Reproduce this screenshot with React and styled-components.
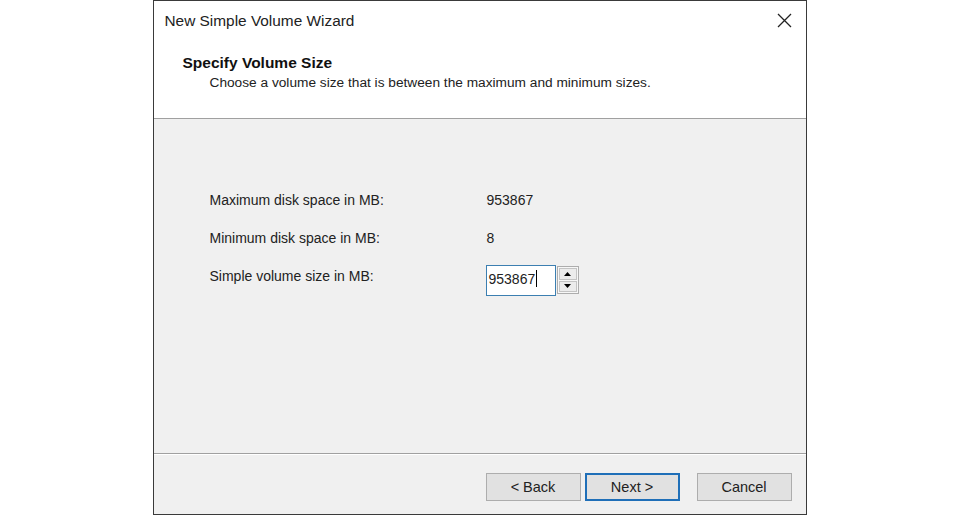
import React from 'react'
import styled, { createGlobalStyle } from 'styled-components'

const GlobalStyle = createGlobalStyle`
  html, body {
    margin: 0;
    padding: 0;
    background: #ffffff;
  }
  body {
    font-family: "Liberation Sans", Arial, sans-serif;
    color: #1a1a1a;
  }
`

const Page = styled.div`
  width: 960px;
  height: 516px;
  display: flex;
  justify-content: center;
`

const Window = styled.div`
  width: 652px;
  height: 513px;
  margin-left: -1px;
  border: 1px solid #3a3a3a;
  display: flex;
  flex-direction: column;
  background: #f0f0f0;
`

const TitleBar = styled.div`
  height: 39px;
  display: flex;
  align-items: center;
  justify-content: space-between;
  padding: 0 10px 0 11px;
  background: #ffffff;
  font-size: 15.4px;
  color: #222;
`

const CloseButton = styled.div`
  width: 20px;
  height: 20px;
  display: flex;
  align-items: center;
  justify-content: center;
  margin-right: 1px;
`

const Header = styled.div`
  height: 79px;
  box-sizing: border-box;
  background: #ffffff;
  border-bottom: 1px solid #a0a0a0;
  padding: 14px 0 0 29px;
`

const HeaderTitle = styled.div`
  font-size: 15.5px;
  font-weight: bold;
  color: #111;
  line-height: 17px;
`

const HeaderSub = styled.div`
  font-size: 13.7px;
  color: #222;
  margin-top: 4px;
  padding-left: 27px;
`

const Body = styled.div`
  flex: 1;
  padding: 70px 0 0 56px;
  border-bottom: 1px solid #a0a0a0;
  box-shadow: 0 1px 0 #ffffff;
  display: grid;
  grid-template-columns: 277px auto;
  grid-auto-rows: 38px;
  align-content: start;
  font-size: 14px;
  color: #222;
`

const Label = styled.div`
  display: flex;
  align-items: center;
  height: 22px;
`

const Value = styled.div`
  display: flex;
  align-items: center;
  height: 22px;
`

const SpinRow = styled.div`
  display: flex;
  align-items: center;
  gap: 1px;
  margin-top: -8px;
  margin-left: -1px;
`

const Input = styled.div`
  width: 66px;
  height: 28px;
  box-sizing: content-box;
  border: 1px solid #3c7fb1;
  background: #ffffff;
  display: flex;
  align-items: center;
  padding: 0 0 3px 2px;
  height: 26px;
  font-size: 14px;
`

const Caret = styled.span`
  display: inline-block;
  width: 1px;
  height: 17px;
  background: #000;
  margin-left: 1px;
`

const Spinner = styled.div`
  width: 22px;
  height: 28px;
  border: 1px solid #adadad;
  background: #f7f7f7;
  display: flex;
  flex-direction: column;
  justify-content: space-between;
  padding: 1px;
  box-sizing: border-box;
`

const SpinButton = styled.div`
  flex: 1;
  display: flex;
  align-items: center;
  justify-content: center;
  border: 1px solid #c4c4c4;
  background: #ececec;
  & + & {
    margin-top: 1px;
  }
`

const Footer = styled.div`
  height: 60px;
  display: flex;
  justify-content: flex-end;
  align-items: flex-start;
  padding: 19px 14px 0 0;
  box-sizing: border-box;
  gap: 4px;
`

const Button = styled.div`
  width: 93px;
  height: 26px;
  border: 1px solid ${p => (p.$primary ? '#1f6fb8' : '#adadad')};
  box-shadow: ${p => (p.$primary ? 'inset 0 0 0 1px #1f6fb8' : 'none')};
  background: #e1e1e1;
  display: flex;
  align-items: center;
  justify-content: center;
  font-size: 14.5px;
  color: #222;
  margin-left: ${p => p.$gap || 0}px;
`

const Triangle = ({ down }) => (
  <svg width="7" height="4" viewBox="0 0 7 4">
    <polygon points={down ? '0,0 7,0 3.5,4' : '0,4 7,4 3.5,0'} fill="#000" />
  </svg>
)

export default function App() {
  return (
    <Page>
      <GlobalStyle />
      <Window>
        <TitleBar>
          <span>New Simple Volume Wizard</span>
          <CloseButton>
            <svg width="15" height="15" viewBox="0 0 15 15">
              <path d="M1 1 L14 14 M14 1 L1 14" stroke="#222" strokeWidth="1.3" />
            </svg>
          </CloseButton>
        </TitleBar>
        <Header>
          <HeaderTitle>Specify Volume Size</HeaderTitle>
          <HeaderSub>Choose a volume size that is between the maximum and minimum sizes.</HeaderSub>
        </Header>
        <Body>
          <Label>Maximum disk space in MB:</Label>
          <Value>953867</Value>
          <Label>Minimum disk space in MB:</Label>
          <Value>8</Value>
          <Label>Simple volume size in MB:</Label>
          <SpinRow>
            <Input>
              953867<Caret />
            </Input>
            <Spinner>
              <SpinButton><Triangle /></SpinButton>
              <SpinButton><Triangle down /></SpinButton>
            </Spinner>
          </SpinRow>
        </Body>
        <Footer>
          <Button>&lt; Back</Button>
          <Button $primary>Next &gt;</Button>
          <Button $gap={13}>Cancel</Button>
        </Footer>
      </Window>
    </Page>
  )
}
